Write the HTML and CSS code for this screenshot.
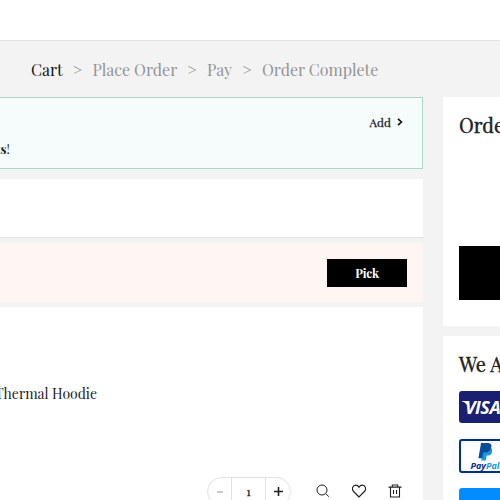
FILE: index.html
```
<!DOCTYPE html>
<html lang="en">
<head>
<meta charset="utf-8">
<title>Cart</title>
<link rel="stylesheet" href="styles.css">
</head>
<body>
<header class="topbar"></header>
<nav class="steps">
  <span class="step current">Cart</span><span class="sep">&gt;</span>
  <span class="step place">Place Order</span><span class="sep">&gt;</span>
  <span class="step pay">Pay</span><span class="sep">&gt;</span>
  <span class="step">Order Complete</span>
</nav>
<div class="layout">
  <main class="main">
    <section class="promo">
      <div class="add"><span>Add</span>
        <svg width="6" height="8" viewBox="0 0 6 8"><path d="M1 .8 4.4 4 1 7.2" fill="none" stroke="#111" stroke-width="1.7"/></svg>
      </div>
      <div class="note"><b>ts</b>!</div>
    </section>
    <section class="panel"></section>
    <section class="gift"><button class="pick">Pick</button></section>
    <section class="item">
      <div class="name">Thermal Hoodie</div>
      <div class="tools">
        <div class="qty">
          <span class="cell"><svg width="6" height="2"><path d="M0 1h6" stroke="#bbb" stroke-width="1.5"/></svg></span>
          <span class="cell value">1</span>
          <span class="cell"><svg width="9" height="9"><path d="M0 4.5h9M4.5 0v9" stroke="#222" stroke-width="1.6"/></svg></span>
        </div>
        <svg class="icon" width="14" height="14" viewBox="0 0 14 14" fill="none" stroke="#222"><circle cx="6" cy="6" r="5"/><path d="m9.7 9.7 3.2 3"/></svg>
        <svg class="icon" width="14" height="14" viewBox="0 0 14 14" fill="none" stroke="#222" stroke-width="1.2"><path d="M7 13 1.6 7.5C-.8 4.8.8 1.2 3.7 1.2 5.3 1.2 6.4 2.2 7 3.3 7.6 2.2 8.7 1.2 10.3 1.2c2.9 0 4.5 3.6 2.1 6.3Z"/></svg>
        <svg class="icon" width="14" height="14" viewBox="0 0 14 14" fill="none" stroke="#222" stroke-width="1.1"><path d="M.5 3.1h13M4.3 3V1h5.4v2M2.5 3v10h9V3M5.5 6v4M8.5 6v4"/></svg>
      </div>
    </section>
  </main>
  <aside class="side">
    <section class="summary"><h2>Order Summary</h2><div class="checkout"></div></section>
    <section class="accept">
      <h2>We Accept</h2>
      <div class="card visa"><svg width="5" height="4"><path d="M0 0h5v4Q3 1 0 .6Z" fill="#fff"/></svg><span>VISA</span></div>
      <div class="card paypal">
        <svg width="15" height="18" viewBox="0 0 15 19"><path d="M5 5h8c2 1 2 4 .8 6.3-1 1.5-2.7 2-5 2L7.8 18.6H3Z" fill="#179bd7"/><path d="M2.8 0h7c3.5 0 4.6 2.3 3.6 5.3-.9 3.2-3.3 4.8-6.5 4.8H5.2L4 16H0Z" fill="#0a4c9c"/></svg>
        <span class="word">Pay<i>Pal</i></span>
      </div>
      <div class="card blue"></div>
    </section>
  </aside>
</div>
</body>
</html>
```
FILE: styles.css
```
* { box-sizing: border-box; }
body { margin: 0; width: 500px; height: 500px; overflow: hidden; background: #f3f3f3; color: #222; font-family: "Playfair Display", "Liberation Serif", serif; }
svg { display: block; flex: none; }
.topbar { height: 41px; background: #fff; border-bottom: 1px solid #e2e2e2; }
.steps { display: flex; gap: 10px; height: 56px; padding: 18px 0 0 31px; font-size: 16px; line-height: 22px; color: #949494; white-space: nowrap; }
.current { width: 31.5px; color: #111; }
.sep { width: 10px; }
.place { width: 84.5px; }
.pay { width: 25px; }
.layout { display: flex; gap: 20px; }
.main { width: 423px; flex: none; }
.promo { height: 72px; background: #f6fcfb; border: 1px solid #aad8c7; border-left: 0; }
.add { display: flex; justify-content: flex-end; align-items: center; gap: 6px; height: 16px; margin: 16px 19px 0 0; font-size: 12px; -webkit-text-stroke: .25px #222; }
.note { margin-top: 10px; margin-left: -4px; font-size: 13px; line-height: 18px; }
.panel { height: 59px; margin-top: 10px; background: #fff; border-bottom: 1px solid #e2e2e2; }
.gift { height: 59px; margin-top: 5px; padding: 16px 16px 0 0; background: #fff5f2; display: flex; justify-content: flex-end; }
.pick { width: 80px; height: 28px; padding: 0; border: 0; background: #000; color: #fff; font: bold 12px "Playfair Display", "Liberation Serif", serif; letter-spacing: -.2px; }
.item { height: 193px; margin-top: 5px; padding-top: 77px; background: #fff; overflow: hidden; }
.name { margin-left: -5px; font-size: 14px; line-height: 20px; }
.tools { display: flex; justify-content: flex-end; margin: 73px 21px 0 0; }
.qty { display: flex; width: 84px; height: 29px; margin-right: 3px; border: 1px solid #e2e2e2; border-radius: 15px; }
.cell { display: flex; flex: 1; align-items: center; justify-content: center; }
.cell:first-child { flex: 0 0 23px; }
.cell:last-child { flex: 0 0 24px; }
.value { border: solid #e2e2e2; border-width: 0 1px; font-size: 11px; -webkit-text-stroke: .3px #222; }
.icon { margin: 7px 0 0 22px; }
.side { width: 57px; flex: none; overflow: hidden; }
.side h2 { margin: 0; font-size: 20px; line-height: 28px; font-weight: 400; -webkit-text-stroke: .4px #222; white-space: nowrap; }
.summary { height: 229px; padding: 14px 0 0 16px; background: #fff; }
.checkout { height: 54px; margin-top: 107px; background: #000; }
.accept { height: 164px; margin-top: 10px; padding: 14px 0 0 16px; background: #fff; overflow: hidden; }
.card { width: 52px; height: 34px; margin-bottom: 15px; border-radius: 3px; }
.visa { display: flex; height: 32px; margin-top: 13px; margin-bottom: 16px; padding-left: 3px; background: #1a1f71; color: #fff; font: italic bold 18px/33px "Open Sans", sans-serif; letter-spacing: -.5px; }
.visa svg { margin: 10px -2px 0 0; }
.paypal { display: flex; flex-direction: column; align-items: center; padding-top: 2px; border: 2px solid #00308a; background: #fff; }
.word { color: #00308a; font: italic bold 9px/9px "Open Sans", sans-serif; }
.word i { color: #179bd7; }
.blue { background: #028cff; margin: 0; }
```
